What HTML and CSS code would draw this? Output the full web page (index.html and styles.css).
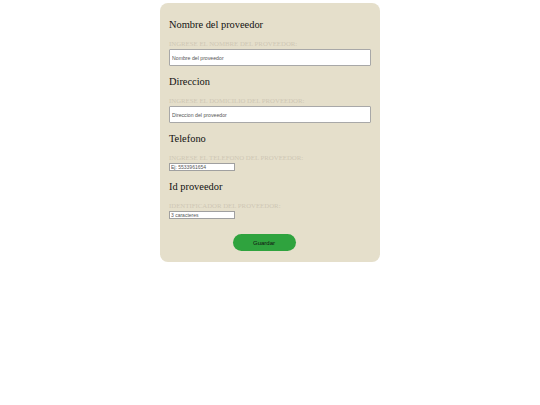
FILE: index.html
```html
<!DOCTYPE html>
<html>
<head>
<meta charset="utf-8">
<link rel="stylesheet" href="styles.css">
</head>
<body>
<form class="card">
  <div class="field">
    <h2 class="title">Nombre del proveedor</h2>
    <label class="hint">Ingrese el nombre del proveedor:</label>
    <input class="input wide" type="text" placeholder="Nombre del proveedor">
  </div>
  <div class="field">
    <h2 class="title">Direccion</h2>
    <label class="hint">Ingrese el domicilio del proveedor:</label>
    <input class="input wide" type="text" placeholder="Direccion del proveedor">
  </div>
  <div class="field">
    <h2 class="title">Telefono</h2>
    <label class="hint">Ingrese el telefono del proveedor:</label>
    <input class="input small" type="text" placeholder="Ej: 5533961654">
  </div>
  <div class="field">
    <h2 class="title">Id proveedor</h2>
    <label class="hint">Identificador del proveedor:</label>
    <input class="input small" type="text" placeholder="3 caracteres">
  </div>
  <div class="actions">
    <button class="btn" type="button">Guardar</button>
  </div>
</form>
</body>
</html>
```
FILE: styles.css
```css
html, body {
  margin: 0;
  padding: 0;
  background: #ffffff;
}
body {
  font-family: "Liberation Serif", serif;
}
.card {
  width: 220px;
  box-sizing: border-box;
  margin: 3px auto 0;
  padding: 15px 9px 11px 9px;
  background: #e5dfcb;
  border-radius: 8px;
  display: flex;
  flex-direction: column;
}
.field {
  display: flex;
  flex-direction: column;
  align-items: flex-start;
  margin-bottom: 9px;
}
.title {
  margin: 0;
  font-size: 10.4px;
  line-height: 13px;
  font-weight: normal;
  color: #111;
}
.hint {
  margin-top: 9px;
  font-size: 6.8px;
  line-height: 8px;
  text-transform: uppercase;
  color: #cfc7b5;
}
.input {
  margin: 0;
  margin-top: 1px;
  box-sizing: border-box;
  background: #fff;
  font-family: "Liberation Sans", sans-serif;
  padding: 0 2px;
  outline: none;
}
.input::placeholder {
  color: #555;
}
.wide {
  width: 202px;
  height: 17px;
  border: 1px solid #a8a8a8;
  border-radius: 1px;
  font-size: 5.2px;
}
.small {
  width: 66px;
  height: 8px;
  border: 1px solid #a0a0a0;
  font-size: 5px;
  padding: 0 1px;
}
.actions {
  display: flex;
  justify-content: center;
  margin-top: 6px;
  padding-right: 12px;
}
.btn {
  width: 63px;
  height: 17px;
  border: none;
  border-radius: 9px;
  background: #2fa33e;
  color: #111;
  font-family: "Liberation Sans", sans-serif;
  font-size: 6px;
  padding: 0;
}
```
